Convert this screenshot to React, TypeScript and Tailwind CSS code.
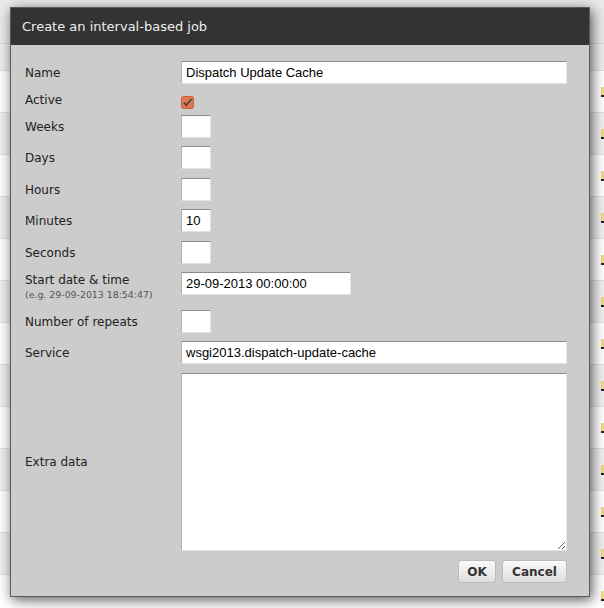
import type { ReactNode } from "react";

const label = "w-[156px] shrink-0 text-[12px] leading-[16px] text-[#222]";
const field =
  "h-[23px] bg-white border border-t-[#8c8c8c] border-l-[#b4b4b4] border-r-[#e2e2e2] border-b-[#e2e2e2] px-[4px] text-[13px] text-black outline-none [font-family:'Liberation_Sans',Arial,sans-serif]";

const Row = ({ name, children, className }: { name: ReactNode; children: ReactNode; className: string }) => (
  <div className={`flex items-center ${className}`}>
    <div className={label}>{name}</div>
    {children}
  </div>
);

const Checkbox = () => (
  <svg width="13" height="13" viewBox="0 0 13 13" className="mt-[5px]">
    <rect x="0.5" y="0.5" width="12" height="12" rx="2" fill="#e8774f" stroke="#c95d38" />
    <path d="M2.8 6.6 L5.3 9.2 L10.6 3.2" fill="none" stroke="#4a4a4a" strokeWidth="1.8" />
  </svg>
);

export default function App() {
  const rows = Array.from({ length: 13 });

  return (
    <div className="relative w-[604px] h-[608px] overflow-hidden bg-[#f4f4f4] [font-family:'DejaVu_Sans',Verdana,sans-serif]">
      {/* page behind the dialog */}
      <div className="h-[44px] bg-[#e9e9e9] border-b border-[#d6d6d6]" />
      <div className="h-[27px] bg-[#ececec] border-b border-[#dcdcdc]" />
      {rows.map((_, i) => (
        <div
          key={i}
          className={`h-[42px] border-b border-[#dedede] flex items-center justify-end ${i % 2 === 0 ? "bg-white" : "bg-[#efefef]"}`}
        >
          <span className="w-[3px] h-[10px] bg-[#f0d98a] border-b-2 border-[#222]" />
        </div>
      ))}

      {/* modal dialog */}
      <div className="absolute left-[10px] top-[7px] w-[580px] border border-[#5a5a5a] bg-[#cccccc] shadow-[2px_3px_12px_rgba(0,0,0,0.65)]">
        <div className="h-[37px] bg-[#333333] flex items-center pl-[11px] text-[13px] text-[#eeeeee]">
          Create an interval-based job
        </div>

        <div className="pt-[16px] pb-[13px] pl-[14px] pr-[22px]">
          <Row name="Name" className="">
            <input className={`${field} flex-1`} defaultValue="Dispatch Update Cache" />
          </Row>

          <div className="flex items-start mt-[7px] h-[20px]">
            <div className={`${label} pt-[1px]`}>Active</div>
            <Checkbox />
          </div>

          <Row name="Weeks" className="mt-[4px]">
            <input className={`${field} w-[30px]`} />
          </Row>
          <Row name="Days" className="mt-[8px]">
            <input className={`${field} w-[30px]`} />
          </Row>
          <Row name="Hours" className="mt-[9px]">
            <input className={`${field} w-[30px]`} />
          </Row>
          <Row name="Minutes" className="mt-[8px]">
            <input className={`${field} w-[30px]`} defaultValue="10" />
          </Row>
          <Row name="Seconds" className="mt-[9px]">
            <input className={`${field} w-[30px]`} />
          </Row>

          <div className="flex items-start mt-[8px] h-[29px]">
            <div className={`${label} pt-[1px]`}>
              <div className="leading-[15px]">Start date &amp; time</div>
              <div className="text-[9.4px] leading-[14px] text-[#555]">(e.g. 29-09-2013 18:54:47)</div>
            </div>
            <input className={`${field} w-[170px]`} defaultValue="29-09-2013 00:00:00" />
          </div>

          <Row name="Number of repeats" className="mt-[9px]">
            <input className={`${field} w-[30px]`} />
          </Row>
          <Row name="Service" className="mt-[8px]">
            <input className={`${field} flex-1`} defaultValue="wsgi2013.dispatch-update-cache" />
          </Row>
          <Row name="Extra data" className="mt-[9px]">
            <textarea className={`${field} flex-1 h-[178px] resize`} />
          </Row>

          <div className="flex justify-end gap-[6px] mt-[9px]">
            <button className="h-[23px] w-[38px] rounded-[3px] border border-[#bdbdbd] bg-gradient-to-b from-[#fafafa] to-[#dedede] text-[12px] font-bold text-[#333]">
              OK
            </button>
            <button className="h-[23px] w-[65px] rounded-[3px] border border-[#bdbdbd] bg-gradient-to-b from-[#fafafa] to-[#dedede] text-[12px] font-bold text-[#333]">
              Cancel
            </button>
          </div>
        </div>
      </div>
    </div>
  );
}
